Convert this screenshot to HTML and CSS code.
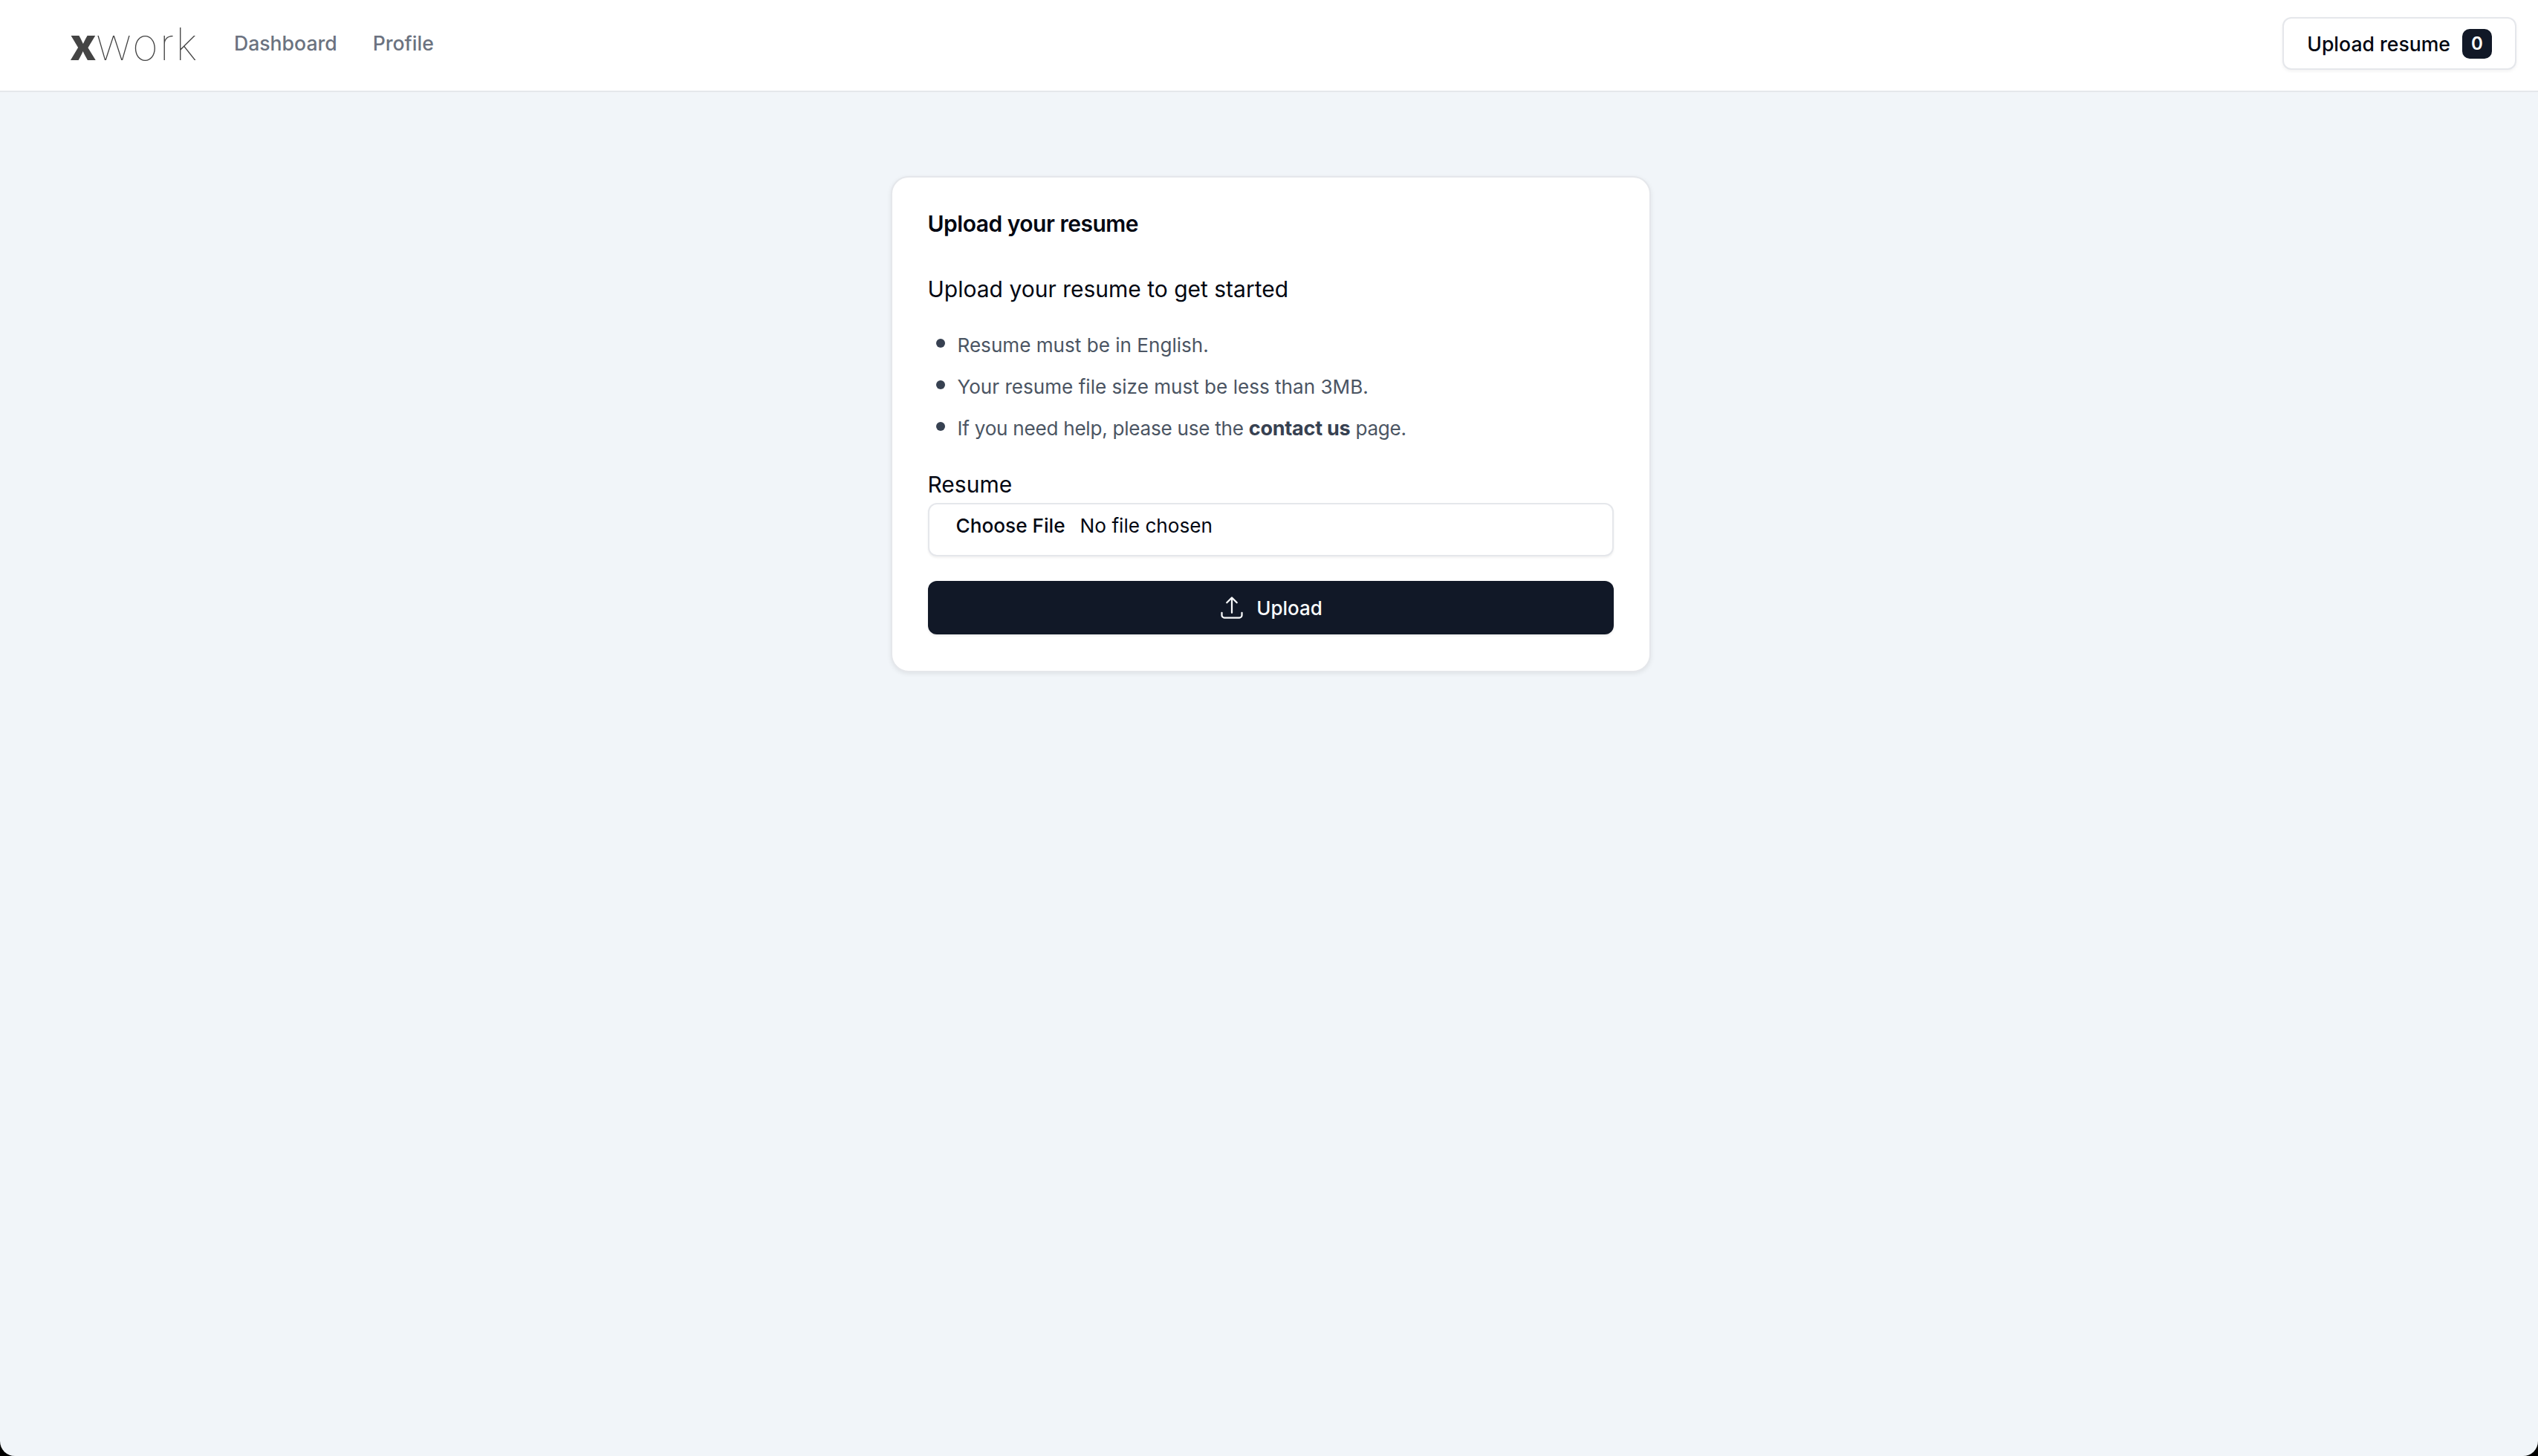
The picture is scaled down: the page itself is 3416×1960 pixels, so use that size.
FILE: index.html
```html
<!DOCTYPE html>
<html lang="en">

<head>
    <meta charset="UTF-8">
    <title>Upload your resume - xwork</title>
    <link rel="stylesheet" href="styles.css">
</head>

<body>
    <div class="app">
        <header class="topbar">
            <a href="#" class="logo"><span class="logo-x">x</span><span class="logo-work">work</span></a>
            <nav class="topnav">
                <a href="#">Dashboard</a>
                <a href="#">Profile</a>
            </nav>
            <a href="#" class="upload-link">
                Upload resume
                <span class="badge">0</span>
            </a>
        </header>

        <main class="content">
            <section class="card">
                <h2 class="card-title">Upload your resume</h2>
                <p class="card-lead">Upload your resume to get started</p>
                <ul class="rules">
                    <li>Resume must be in English.</li>
                    <li>Your resume file size must be less than 3MB.</li>
                    <li class="rules-help">If you need help, please use the <a href="#">contact us</a> page.</li>
                </ul>
                <form>
                    <label for="resume">Resume</label>
                    <input type="file" id="resume" name="resume">
                    <button type="submit">
                        <svg class="upload-icon" viewBox="0 0 24 24" fill="none" stroke="currentColor" stroke-width="1.5" stroke-linecap="round" stroke-linejoin="round">
                            <path d="M3 16.5v2.25A2.25 2.25 0 0 0 5.25 21h13.5A2.25 2.25 0 0 0 21 18.75V16.5m-13.5-9L12 3m0 0 4.5 4.5M12 3v13.5"/>
                        </svg>
                        Upload
                    </button>
                </form>
            </section>
        </main>
    </div>
</body>

</html>
```

FILE: styles.css
```css
html {
    background-color: black;
}

body {
    font-family: "Inter", sans-serif;
    margin: 0;
    padding: 0;
    color: #030712;
}

a {
    text-decoration: none;
}

.app {
    height: 100vh;
    background-color: #f1f5f9;
    border-radius: 0 0 20px 20px;
    overflow: hidden;
}

/* Top bar */
.topbar {
    height: 122px;
    box-sizing: content-box;
    display: flex;
    align-items: center;
    padding: 0 29px 0 94px;
    background-color: white;
    border-bottom: 2px solid #e5e7eb;
}

.logo {
    color: #444;
    font-size: 60px;
    line-height: 1;
    width: 170px;
    white-space: nowrap;
    margin-bottom: 4px;
}

.logo-x {
    font-weight: 800;
    letter-spacing: -1px;
}

.logo-work {
    font-weight: 100;
    letter-spacing: 2px;
}

.topnav {
    display: flex;
    gap: 48px;
    margin-left: 51px;
    margin-bottom: 6px;
}

.topnav a {
    color: #6b7280;
    font-size: 26.6px;
    font-weight: 500;
}

.upload-link {
    margin-left: auto;
    margin-bottom: 5px;
    display: flex;
    align-items: center;
    gap: 16px;
    height: 71px;
    box-sizing: border-box;
    padding: 0 31px;
    color: #030712;
    font-size: 26.6px;
    font-weight: 500;
    background-color: white;
    border: 2px solid #e5e7eb;
    border-radius: 12px;
    box-shadow: 0 2px 4px rgba(0, 0, 0, 0.05);
}

.badge {
    width: 40px;
    height: 40px;
    display: flex;
    align-items: center;
    justify-content: center;
    background-color: #111827;
    color: white;
    font-size: 24px;
    font-weight: 600;
    border-radius: 10px;
}

/* Card */
.content {
    display: flex;
    justify-content: center;
    padding: 113px 0 0 4px;
}

.card {
    width: 1023px;
    box-sizing: border-box;
    padding: 42px 48px 49px;
    background-color: white;
    border: 2px solid #e5e7eb;
    border-radius: 24px;
    box-shadow: 0 2px 6px rgba(0, 0, 0, 0.08);
}

.card-title {
    margin: 0;
    font-size: 30px;
    line-height: 40px;
    font-weight: 600;
    letter-spacing: -0.5px;
    color: #030712;
}

.card-lead {
    margin: 48px 0 0;
    font-size: 30px;
    line-height: 40px;
    font-weight: 400;
}

.rules {
    list-style: none;
    margin: 36px 0 0;
    padding: 0;
    font-size: 26.1px;
    line-height: 40px;
    color: #4b5563;
}

.rules li {
    position: relative;
    padding-left: 40px;
    margin-bottom: 16px;
}

.rules li::before {
    content: '';
    position: absolute;
    left: 11px;
    top: 11px;
    width: 12px;
    height: 12px;
    border-radius: 50%;
    background-color: #374151;
}

.rules .rules-help {
    letter-spacing: -0.25px;
}

.rules a {
    color: #374151;
    font-size: 27px;
    font-weight: 700;
}

label {
    display: block;
    margin-top: 35px;
    font-size: 30px;
    line-height: 40px;
}

input[type="file"] {
    display: block;
    width: 100%;
    height: 72px;
    box-sizing: border-box;
    margin-top: 5px;
    padding: 13px 36px 10px;
    font-family: "Inter", sans-serif;
    font-size: 26.2px;
    color: #030712;
    background-color: white;
    border: 2px solid #e5e7eb;
    border-radius: 12px;
    box-shadow: 0 2px 3px rgba(0, 0, 0, 0.06);
}

input[type="file"]::file-selector-button {
    margin: 0 20px 0 0;
    padding: 0;
    font-family: "Inter", sans-serif;
    font-size: 26.2px;
    font-weight: 500;
    color: #030712;
    background: none;
    border: none;
}

button {
    display: flex;
    align-items: center;
    justify-content: center;
    gap: 15px;
    width: 100%;
    height: 72px;
    margin-top: 33px;
    padding: 0;
    font-family: "Inter", sans-serif;
    font-size: 26px;
    font-weight: 500;
    color: #f9fafb;
    background-color: #111827;
    border: none;
    border-radius: 12px;
    box-shadow: 0 2px 3px rgba(0, 0, 0, 0.08);
}

.upload-icon {
    width: 36px;
    height: 36px;
}
```
